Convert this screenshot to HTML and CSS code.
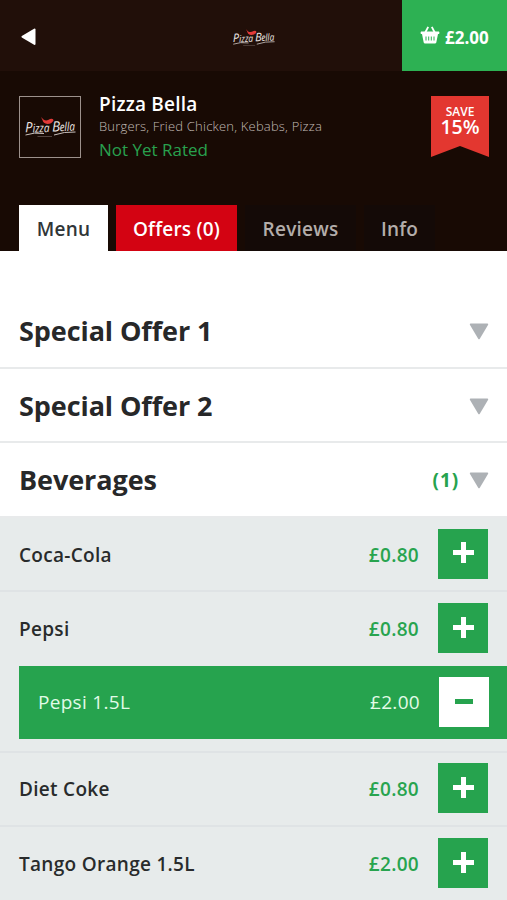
FILE: index.html
```html
<!DOCTYPE html>
<html lang="en">
<head>
<meta charset="utf-8">
<title>Pizza Bella</title>
<link rel="stylesheet" href="styles.css">
</head>
<body>
<svg class="defs" width="0" height="0" aria-hidden="true">
  <symbol id="logo" viewBox="0 0 104 42">
    <g class="logo-word" transform="rotate(-2 52 21)">
      <text x="2" y="29" font-size="28" textLength="15" lengthAdjust="spacingAndGlyphs">P</text>
      <text x="17" y="30" font-size="24" textLength="34" lengthAdjust="spacingAndGlyphs">izza</text>
      <text x="56" y="29" font-size="28" textLength="16" lengthAdjust="spacingAndGlyphs">B</text>
      <text x="71" y="29" font-size="24" textLength="31" lengthAdjust="spacingAndGlyphs">ella</text>
    </g>
    <path class="logo-line" d="M3 36Q20 30 40 33M60 36Q80 29 103 30"/>
    <path class="logo-line logo-tag" d="M27 39H56"/>
    <path class="logo-chili" d="M34 0L39 5Q45 9 52 4Q59 2 59 7Q55 14 47 14Q38 13 37 6Z"/>
  </symbol>
  <symbol id="down" viewBox="0 0 20 17"><path d="M1.5 .6H18.5Q19.7 .8 19 2L10.8 15.7Q10 16.8 9.2 15.7L1 2Q.3 .8 1.5 .6Z"/></symbol>
</svg>
<header class="topbar">
  <svg class="back" viewBox="0 0 15 18"><path d="M13.5 .5Q14.5 .5 14.5 1.5V16Q14.5 17 13.5 17L.8 9.5Q0 8.8 .8 8Z"/></svg>
  <svg class="logo-small"><use href="#logo"/></svg>
  <div class="basket">
    <svg class="basket-icon" viewBox="0 0 20 18">
      <path class="handle" d="M5 7L8.2 .8M15 7L11.8 .8"/>
      <path d="M1 5.5H19Q20 7 19 8H18L16.3 16.5Q16 17.5 15 17.5H5Q4 17.5 3.7 16.5L2 8H1Q0 7 1 5.5Z"/>
      <path class="slots" d="M6 10.5V14.5M8.7 10.5V14.5M11.3 10.5V14.5M14 10.5V14.5"/>
    </svg>
    <span class="total">£2.00</span>
  </div>
</header>
<section class="hero">
  <div class="profile">
    <div class="avatar"><svg class="logo-large"><use href="#logo"/></svg></div>
    <div class="details">
      <h1 class="name">Pizza Bella</h1>
      <p class="cuisine">Burgers, Fried Chicken, Kebabs, Pizza</p>
      <p class="rating">Not Yet Rated</p>
    </div>
    <div class="ribbon"><span class="save">SAVE</span><span class="percent">15%</span></div>
  </div>
  <nav class="tabs">
    <a class="tab active"><span>Menu</span></a>
    <a class="tab offers"><span>Offers (0)</span></a>
    <a class="tab reviews"><span>Reviews</span></a>
    <a class="tab info"><span>Info</span></a>
  </nav>
</section>
<main>
  <div class="category"><h2>Special Offer 1</h2><svg class="arrow"><use href="#down"/></svg></div>
  <div class="category"><h2>Special Offer 2</h2><svg class="arrow"><use href="#down"/></svg></div>
  <div class="category"><h2>Beverages</h2><span class="count">(1)</span><svg class="arrow"><use href="#down"/></svg></div>
  <div class="items">
    <div class="item first"><span class="label">Coca-Cola</span><span class="price">£0.80</span><button class="add"></button></div>
    <div class="item open"><span class="label">Pepsi</span><span class="price">£0.80</span><button class="add"></button></div>
    <div class="selected"><span class="label">Pepsi 1.5L</span><span class="price">£2.00</span><button class="remove"></button></div>
    <div class="item after"><span class="label">Diet Coke</span><span class="price">£0.80</span><button class="add"></button></div>
    <div class="item last"><span class="label">Tango Orange 1.5L</span><span class="price">£2.00</span><button class="add"></button></div>
  </div>
</main>
</body>
</html>
```
FILE: styles.css
```css
* { box-sizing: border-box; }
body { margin: 0; height: 900px; overflow: hidden; background: #fff; font-family: "Open Sans", sans-serif; color: #292b2c; }
h1, h2, p { margin: 0; }
.defs { display: none; }
svg { flex: none; }
.topbar { height: 71px; background: #210f09; display: grid; grid-template-columns: 232px 1fr 105px; align-items: center; }
.back { width: 15px; height: 18px; margin-left: 21px; margin-top: 2px; fill: #fff; }
.logo-small { width: 43px; height: 18px; margin-top: 4px; }
.basket { height: 71px; background: #2db153; color: #fff; display: flex; align-items: center; padding-left: 18px; padding-top: 3px; }
.basket-icon { width: 20px; height: 18px; fill: #fff; margin-right: 5px; margin-top: -5px; }
.handle { fill: none; stroke: #fff; stroke-width: 1.8; }
.slots { stroke: #2db153; stroke-width: 1; }
.total { font-size: 17px; font-weight: 700; }
.logo-word { fill: #eee8e5; font-family: "Open Sans", sans-serif; font-style: italic; font-weight: 500; }
.logo-line { fill: none; stroke: #c9c1bd; stroke-width: 2; }
.logo-tag { stroke: #665853; stroke-width: 1.5; }
.logo-chili { fill: #e13a38; }
.hero { height: 180px; background: #180a04; padding: 25px 18px 0 19px; display: flex; flex-direction: column; justify-content: space-between; }
.profile { display: flex; align-items: flex-start; }
.avatar { width: 62px; height: 62px; border: 1px solid #9c918c; display: flex; align-items: center; justify-content: center; }
.logo-large { width: 52px; height: 21px; }
.details { flex: 1; padding-left: 18px; }
.name { font-size: 19px; line-height: 26px; font-weight: 600; color: #fff; margin-top: -5px; letter-spacing: .2px; }
.cuisine { font-size: 13px; line-height: 18px; font-weight: 300; color: #c2bab6; letter-spacing: .2px; }
.rating { font-size: 17px; line-height: 24px; color: #28a14e; margin-top: 3px; }
.ribbon { width: 58px; height: 61px; background: #e33730; clip-path: polygon(0 0, 100% 0, 100% 100%, 50% 82%, 0 100%); color: #fff; display: flex; flex-direction: column; align-items: center; padding-top: 7px; }
.save { font-size: 12px; line-height: 17px; font-weight: 600; }
.percent { font-size: 19.5px; line-height: 27px; margin-top: -7px; font-weight: 600; }
.tabs { display: flex; }
.tab { height: 46px; line-height: 48px; text-align: center; font-size: 19px; font-weight: 600; color: #b3adaa; background: #140a07; letter-spacing: .22px; }
.active { width: 89px; background: #fff; color: #303638; }
.offers { width: 121px; margin-left: 8px; background: #d30312; color: #fff; }
.reviews { width: 111px; margin-left: 8px; }
.info { width: 71px; margin-left: 8px; }
main { padding-top: 43px; }
.category { height: 74.5px; border-bottom: 2px solid #e8eaeb; display: flex; align-items: center; padding: 1px 18px 0 19px; }
.category h2 { font-size: 27px; line-height: 36px; font-weight: 700; flex: 1; color: #272829; letter-spacing: -.08px; padding-top: 1px; }
.arrow { width: 20px; height: 17px; fill: #adb1b5; margin-top: 2px; }
.count { font-size: 19px; font-weight: 700; color: #26a34e; margin-right: 10px; letter-spacing: .9px; padding-top: 1px; }
.items { background: #e7ebeb; height: 400px; }
.item { height: 74.5px; border-bottom: 2px solid #dfe3e5; display: flex; align-items: center; padding: 0 19px; }
.label { flex: 1; font-size: 19px; line-height: 28px; font-weight: 600; letter-spacing: .3px; padding-top: 1px; }
.price { font-size: 19px; line-height: 28px; font-weight: 600; color: #28a44f; margin-right: 19px; letter-spacing: .3px; padding-top: 1px; }
.first .label, .first .price { padding-top: 2px; }
.item.open { height: 74px; border-bottom: 0; padding-bottom: 2px; }
.item.after { height: 76px; border-top: 2px solid #dfe3e5; padding-bottom: 2px; }
.item.last { height: 74px; border-bottom: 0; padding-bottom: 2px; }
.add, .remove { width: 50px; height: 50px; padding: 0; border: 0; background: #26a34e; display: grid; place-items: center; align-content: center; }
.add::before, .remove::before { content: ""; grid-area: 1 / 1; width: 21px; height: 5px; background: #fff; }
.add::after { content: ""; grid-area: 1 / 1; width: 5px; height: 21px; background: #fff; }
.add { padding-bottom: 2px; }
.remove { background: #fff; }
.remove::before { width: 18px; background: #26a34e; }
.selected { height: 73px; margin: 0 0 12px 19px; background: #26a34e; display: flex; align-items: center; padding: 0 18px 2px 19px; }
.selected .label, .selected .price { font-weight: 400; color: #e2fbe8; padding-top: 0; }
```
